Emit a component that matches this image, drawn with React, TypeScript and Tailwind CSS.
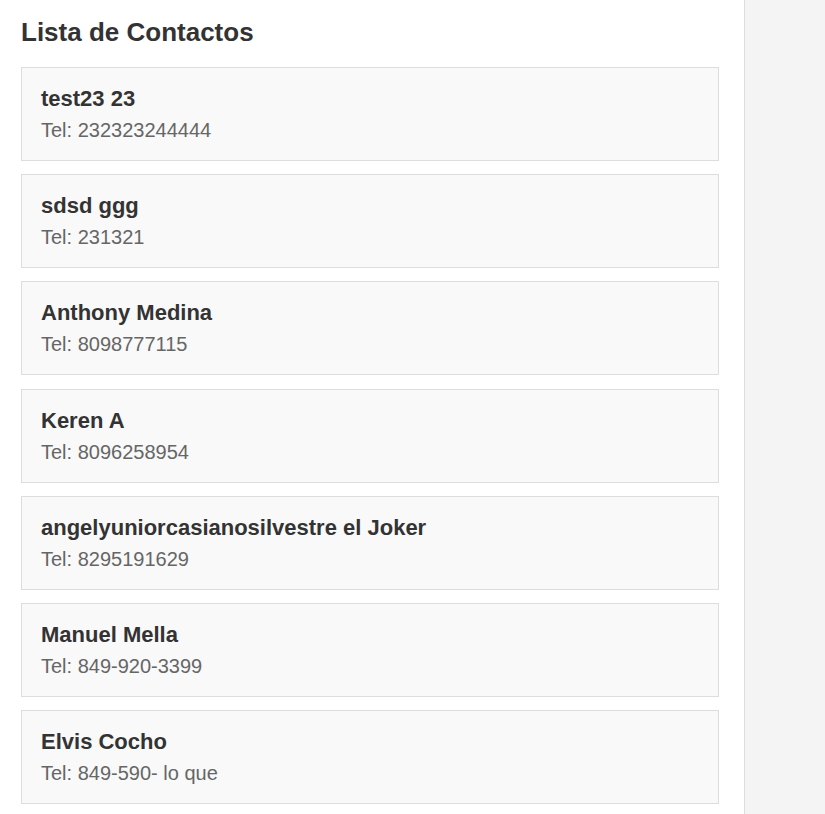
import React from "react";

const contacts = [
  { name: "test23 23", tel: "232323244444" },
  { name: "sdsd ggg", tel: "231321" },
  { name: "Anthony Medina", tel: "8098777115" },
  { name: "Keren A", tel: "8096258954" },
  { name: "angelyuniorcasianosilvestre el Joker", tel: "8295191629" },
  { name: "Manuel Mella", tel: "849-920-3399" },
  { name: "Elvis Cocho", tel: "849-590- lo que" },
];

export default function App() {
  return (
    <div
      className="flex h-[814px] w-full overflow-hidden bg-white"
      style={{ fontFamily: '"Liberation Sans", Arial, sans-serif' }}
    >
      <div className="w-[745px] shrink-0 border-r border-[#dddddd] bg-white pl-[20px] pt-[17px]">
        <h2 className="m-0 pl-[1px] text-[26px] font-bold leading-[30px] text-[#333333]">
          Lista de Contactos
        </h2>
        <div className="mt-[20px] flex flex-col gap-[13.2px] pl-[1px]">
          {contacts.map((c) => (
            <div
              key={c.name}
              className="box-border h-[94px] w-[698px] border border-[#dddddd] bg-[#f9f9f9] pl-[19px] pt-[18px]"
            >
              <div className="text-[22px] font-bold leading-[25px] text-[#333333]">
                {c.name}
              </div>
              <div className="mt-[8px] text-[20px] leading-[23px] text-[#666666]">
                Tel: {c.tel}
              </div>
            </div>
          ))}
        </div>
      </div>
      <div className="flex-1 bg-[#f4f4f4]" />
    </div>
  );
}
